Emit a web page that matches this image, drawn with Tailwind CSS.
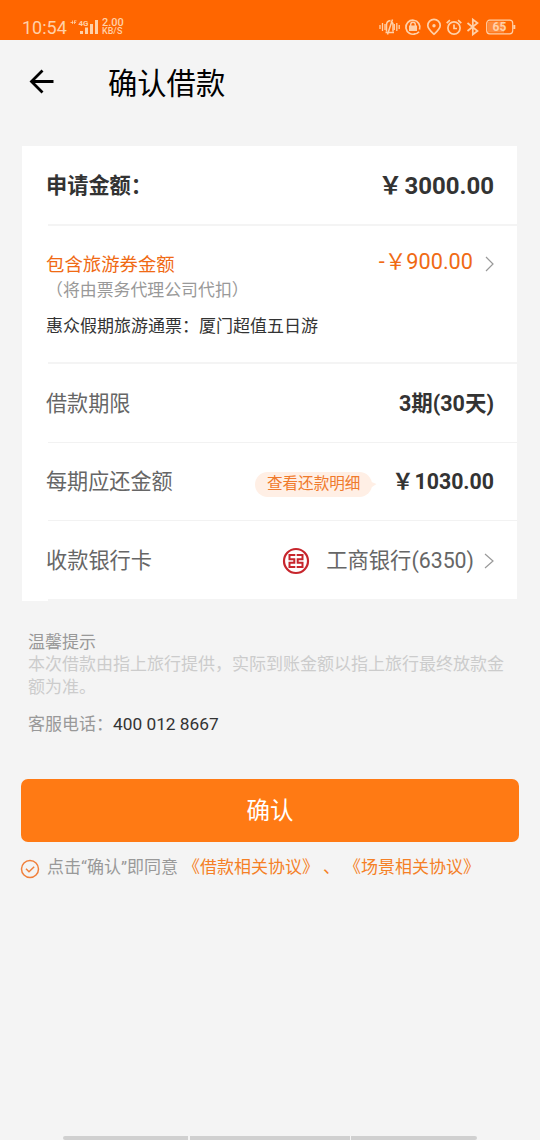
<!DOCTYPE html>
<html lang="zh-CN">
<head>
<meta charset="utf-8">
<meta name="viewport" content="width=device-width, initial-scale=1">
<title>确认借款</title>
<script src="https://cdn.jsdelivr.net/npm/@tailwindcss/browser@4"></script>
</head>
<body class="bg-[#f4f4f4]">
<div class="w-[540px] h-[1140px] flex flex-col overflow-hidden whitespace-nowrap bg-[#f4f4f4] font-[Roboto,'Noto_Sans_CJK_SC',sans-serif] text-[#333]">

  <!-- Status bar -->
  <div class="h-10 shrink-0 bg-[#ff6600] flex items-start justify-between pl-[22px] pr-[23px] text-[#ffd0a8]">
    <div class="flex items-start">
      <span class="w-[48px] mt-[17px] text-[18px] leading-[22px]">10:54</span>
      <svg class="mt-[18px] w-[30px] h-[18px]" viewBox="0 0 30 18" fill="currentColor">
        <path d="M.5 4.500h3M2.500 2.500v3.500M4.500 2.500v3.500M4.500 2.800h2M4.500 4.500h1.500" stroke="currentColor" stroke-width=".8" fill="none"/>
        <text x="8.500" y="7.500" font-size="7.500" font-weight="700" textLength="10" lengthAdjust="spacingAndGlyphs">4G</text>
        <path d="M10 13h3v3h-3zM15 9.500h3v6.500h-3zM20 6h3v10h-3zM25 2h3v14h-3z"/>
      </svg>
      <span class="mt-[18px] ml-[2px] flex flex-col font-medium">
        <span class="text-[11px] leading-[9px]">2.00</span>
        <span class="text-[9px] leading-[8px]">KB/S</span>
      </span>
    </div>
    <svg class="mt-[17px] w-[138px] h-[20px]" viewBox="0 0 138 20" fill="none" stroke="currentColor" stroke-width="1.700">
      <path d="M1 8v4M3.500 6v8M6 7v6M15.300 7v6M17.800 6v8M20.200 8v4" stroke-width="1.300"/>
      <path d="M6.500 15.500h8.500M14 14.500V8q0-2.500-2-4M7.500 14.500V8q0-4 4-4.500M13.500 2.500l-5 15" stroke-width="1.500"/>
      <path d="M36.500 16.700a7 7 0 1 1 4-4.200M34.500 17.200q3.500 0 5.500-2.500"/>
      <path d="M30 8.500h8v5.500h-8z" fill="currentColor" stroke="none"/><path d="M31.700 9V7.500a2.300 2.300 0 0 1 4.600 0V9" stroke-width="1.400"/>
      <path d="M55 17.200c-3-2.700-6.200-5.400-6.200-8.700a6.200 6.200 0 0 1 12.400 0c0 3.300-3.200 6-6.200 8.700z"/>
      <circle cx="55" cy="8.800" r="1.700" fill="currentColor" stroke="none"/>
      <circle cx="75" cy="11" r="6.100"/><path d="M75 7.500v4h3M67.700 6.200l3.200-3M82.300 6.200l-3.200-3"/>
      <path d="M88.500 6l10 8-4.700 3.500v-15l4.700 3.500-10 8"/>
      <rect x="107.700" y="3.200" width="26" height="13.600" rx="3" stroke-width="1.200"/>
      <path d="M109 4.500h16v11h-16z" fill="currentColor" fill-opacity=".35" stroke="none"/>
      <path d="M135.300 8v4" stroke-width="2"/>
      <text x="120.500" y="14.300" text-anchor="middle" font-size="12" font-weight="700" fill="currentColor" stroke="none">65</text>
    </svg>
  </div>

  <!-- Title bar -->
  <header class="h-[106px] shrink-0 flex items-start pl-[29px]">
    <svg class="mt-[29px] w-[25px] h-[25px]" viewBox="0 0 25 25" fill="none" stroke="#000" stroke-width="2.800"><path d="M24.500 12.500H3M13.500 1.500l-11 11 11 11"/></svg>
    <h1 class="ml-[54px] mt-[24px] text-[29.300px] leading-[40px] text-black">确认借款</h1>
  </header>

  <!-- Loan details -->
  <main class="mx-[22px] w-[495px] h-[455px] shrink-0 bg-white flex flex-col pl-[26px]">
    <section class="h-[80px] flex items-center justify-between pr-[23px] border-b-2 border-[#f4f4f4] font-bold">
      <span class="-ml-[2px] mt-[2px] text-[21.200px]">申请金额：</span>
      <span class="mt-[2px] text-[24px]"><span class="mr-[2px]">￥</span>3000.00</span>
    </section>
    <section class="h-[138px] flex justify-between border-b-2 border-[#f4f4f4]">
      <div class="-ml-[2px] flex flex-col">
        <span class="mt-[26px] text-[18.400px] leading-[26px] text-[#f06a14]">包含旅游券金额</span>
        <span class="text-[16.900px] leading-[24px] text-[#999]">（将由票务代理公司代扣）</span>
        <span class="mt-[12px] text-[17px] leading-[24px]">惠众假期旅游通票：厦门超值五日游</span>
      </div>
      <div class="h-[72px] pr-[22px] flex items-center">
        <span class="text-[21.700px] text-[#f06a14]">-￥900.00</span>
        <svg class="ml-[11px] mt-[3px] w-[11px] h-[16px]" viewBox="0 0 11 16" fill="none" stroke="#999" stroke-width="1.200"><path d="M2 1l7 7-7 7"/></svg>
      </div>
    </section>
    <section class="h-[79px] flex items-center justify-between pr-[23px] border-b border-[#f2f2f2] text-[21.300px]">
      <span class="-ml-[2px] mt-[2px] text-[21.100px] text-[#666]">借款期限</span>
      <span class="mt-[2px] text-[21.500px] font-bold">3期(30天)</span>
    </section>
    <section class="h-[78px] flex items-center pr-[23px] border-b border-[#f2f2f2] text-[21.300px]">
      <span class="-ml-[2px] mr-auto mt-px text-[21.100px] text-[#666]">每期应还金额</span>
      <span class="mt-[6px] h-[25px] w-[117px] rounded-full bg-[#ffefe5] flex items-center justify-center pt-px text-[15.600px] text-[#f07a2c]">查看还款明细</span>
      <svg class="mt-[6px] -ml-[3px] w-[8px] h-[8px]" viewBox="0 0 8 8" fill="#ffefe5"><path d="M0 0l7.500 3L0 8z"/></svg>
      <span class="ml-[15px] font-bold"><span class="mr-px">￥</span>1030.00</span>
    </section>
    <section class="h-[80px] flex items-center pr-[22px] border-b-2 border-[#f4f4f4] text-[21.300px] text-[#666]">
      <span class="-ml-[2px] mr-auto mt-[2px] text-[21.200px]">收款银行卡</span>
      <svg class="mr-[16px] mt-[2px] w-[28px] h-[28px]" viewBox="0 0 28 28" fill="none" stroke="#c7252c">
        <circle cx="14" cy="14" r="12" stroke-width="2.200"/>
        <path d="M13.300 8H7.500v4.300h4.800v3.400H7.500V20h5.800M14.700 8h5.800v4.300h-4.800v3.400h4.800V20h-5.800" stroke-width="2"/>
      </svg>
      <span class="mt-[2px]">工商银行(6350)</span>
      <svg class="ml-[9px] mt-px w-[12px] h-[16px]" viewBox="0 0 12 16" fill="none" stroke="#999" stroke-width="1.200"><path d="M2 1l8 7-8 7"/></svg>
    </section>
  </main>

  <!-- Notes -->
  <section class="pl-[28px] pt-[30px] h-[178px] shrink-0 text-[17px] leading-[23px] text-[#999]">
    <p class="h-[22px]">温馨提示</p>
    <p class="text-[#ccc]">本次借款由指上旅行提供，实际到账金额以指上旅行最终放款金<br>额为准。</p>
    <p class="mt-[14px]">客服电话：<span class="text-[17.300px] text-[#333]">400 012 8667</span></p>
  </section>

  <button class="mx-[21px] w-[498px] h-[63px] shrink-0 rounded-[7px] bg-[#ff7a14] text-white text-[23.500px] pt-[2px]">确认</button>

  <div class="mt-[14px] pl-[20px] h-[24px] flex items-center text-[17px]">
    <svg class="mt-px mr-[7px] w-[20px] h-[20px]" viewBox="0 0 20 20" fill="none" stroke="#f0803c" stroke-width="1.500"><circle cx="10" cy="10" r="8.500"/><path d="M6 9.800l3 3 5.200-5"/></svg>
    <span class="text-[#999]">点击“确认”即同意</span>
    <span class="ml-[5px] text-[#f58026]">《借款相关协议》</span>
    <span class="ml-[4px] text-[#f58026]">、</span>
    <span class="ml-[4px] text-[#f58026]">《场景相关协议》</span>
  </div>

  <!-- Gesture bars -->
  <div class="mt-auto ml-[63px] flex h-[4px] shrink-0">
    <i class="w-[125px] rounded-l-full bg-[#d0d0d0]"></i>
    <i class="ml-[2px] w-[160px] bg-[#d0d0d0]"></i>
    <i class="ml-px w-[126px] rounded-r-full bg-[#d0d0d0]"></i>
  </div>
</div>
</body>
</html>
